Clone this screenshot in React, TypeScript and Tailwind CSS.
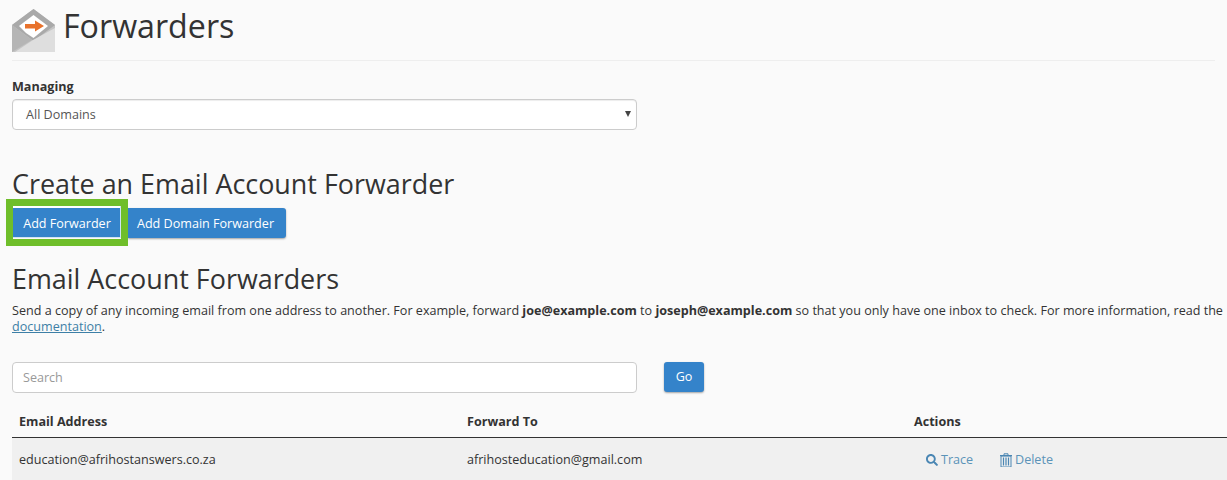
import { FaSearch } from "react-icons/fa";

const font = { fontFamily: '"Open Sans", sans-serif' };

export default function App() {
  return (
    <div style={font} className="h-[480px] w-[1227px] overflow-hidden bg-[#fafafa] text-[12.58px] leading-[20px] text-[#333]">
      <div className="mx-[12px] flex h-[61px] items-start gap-[9px] border-b border-[#eeeeee] pt-[9px]">
        <svg width="43" height="43" viewBox="0 0 43 43" className="shrink-0">
          <path d="M0 16 L21.5 0 L43 16 L43 43 L0 43 Z" fill="#c4c4c4" />
          <path d="M0 16 L21.5 0 L43 16 L21.5 32 Z" fill="#a9a9a9" />
          <path d="M7 17 L21.5 6 L36 17 L21.5 29 L14 24 Z" fill="#ffffff" />
          <path d="M0 16 L20 31 L0 43 Z" fill="#b5b5b5" />
          <path d="M43 19 L43 43 L3 43 L21 31 Z" fill="#dedede" />
          <path d="M13 15 H23 V11.5 L32 17 L23 22.5 V19.5 H13 Z" fill="#e8722c" />
        </svg>
        <h1 className="-ml-[1px] -mt-[1px] text-[32.2px] font-normal leading-[36px] text-[#333]">Forwarders</h1>
      </div>

      <div className="px-[12px]">
        <label className="mt-[16px] block font-bold leading-[20px]">Managing</label>
        <div className="relative mt-[2px] flex h-[31px] w-[625px] items-center rounded-[4px] border border-[#cccccc] bg-white pl-[13px] text-[#555] shadow-[inset_0_1px_1px_rgba(0,0,0,0.075)]">
          All Domains
          <span className="absolute right-[5px] top-[11px] h-0 w-0 border-x-[3px] border-t-[6px] border-x-transparent border-t-[#444]" />
        </div>

        <h2 className="mt-[36px] text-[26.9px] font-normal leading-[35px] text-[#333]">Create an Email Account Forwarder</h2>

        <div className="mt-[7px] flex h-[31px] items-start pl-[1px]">
          <div className="relative flex">
            <button className="flex h-[30px] w-[108px] items-center justify-center bg-[#3483ca] pt-[1px] text-white">
              Add Forwarder
            </button>
            <span className="absolute -bottom-[8px] -left-[7px] -right-[7px] -top-[9px] border-[7px] border-[#6fbe2a]" />
            <span className="absolute -top-[2px] left-0 right-0 h-[2px] bg-white" />
            <span className="absolute bottom-0 left-0 right-0 h-[1px] bg-[#cfe3f3]" />
            <span className="absolute -top-[2px] bottom-0 right-0 w-[1px] bg-[#cfe3f3]" />
          </div>
          <button className="ml-[7px] flex h-[30px] w-[158px] items-center justify-center rounded-r-[3px] bg-[#3483ca] pr-[3px] pt-[1px] text-white shadow-[0_1px_2px_rgba(0,0,0,0.35)]">
            Add Domain Forwarder
          </button>
        </div>

        <h2 className="mt-[22px] text-[26.9px] font-normal leading-[35px] text-[#333]">Email Account Forwarders</h2>

        <p className="mt-[7px] w-[1215px] whitespace-nowrap leading-[16px] text-[#333]">
          Send a copy of any incoming email from one address to another. For example, forward <b>joe@example.com</b> to <b>joseph@example.com</b> so that you only have one inbox to check. For more information, read the
          <br />
          <a className="text-[#3d7fa6] underline">documentation</a>.
        </p>

        <div className="mt-[27px] flex items-start gap-[27px]">
          <div className="flex h-[31px] w-[625px] items-center rounded-[4px] border border-[#cccccc] bg-white pl-[10px] text-[#999]">Search</div>
          <button className="flex h-[30px] w-[40px] items-center justify-center rounded-[3px] bg-[#3483ca] text-white shadow-[0_1px_2px_rgba(0,0,0,0.35)]">Go</button>
        </div>

        <div className="mt-[12px] w-[1215px]">
          <div className="flex h-[33px] items-center border-b border-[#333] pt-[2px] font-bold">
            <div className="w-[448px] pl-[7px]">Email Address</div>
            <div className="w-[447px] pl-[7px]">Forward To</div>
            <div className="pl-[7px]">Actions</div>
          </div>
          <div className="flex h-[42px] items-center bg-[#f0f0f0] pt-[2px]">
            <div className="w-[448px] pl-[7px]">education@afrihostanswers.co.za</div>
            <div className="w-[447px] pl-[7px]">afrihosteducation@gmail.com</div>
            <div className="flex items-center pl-[19px] text-[#5b93b8]">
              <span className="flex w-[74px] items-center gap-[3px]">
                <FaSearch size={12} className="text-[#4a86b3]" />Trace
              </span>
              <span className="flex items-center gap-[3px]">
                <svg width="12" height="14" viewBox="0 0 12 14" className="text-[#4a86b3]">
                  <path d="M4 2 V0.8 H8 V2" fill="none" stroke="currentColor" />
                  <path d="M0 2 H12 V3.2 H0 Z" fill="currentColor" />
                  <path d="M1 3 H11 V14 H1 Z" fill="none" stroke="currentColor" strokeWidth="1" />
                  <path d="M3.5 4.5 V12.5 M6 4.5 V12.5 M8.5 4.5 V12.5" stroke="currentColor" strokeWidth="1.2" />
                </svg>
                Delete
              </span>
            </div>
          </div>
        </div>
      </div>
    </div>
  );
}
